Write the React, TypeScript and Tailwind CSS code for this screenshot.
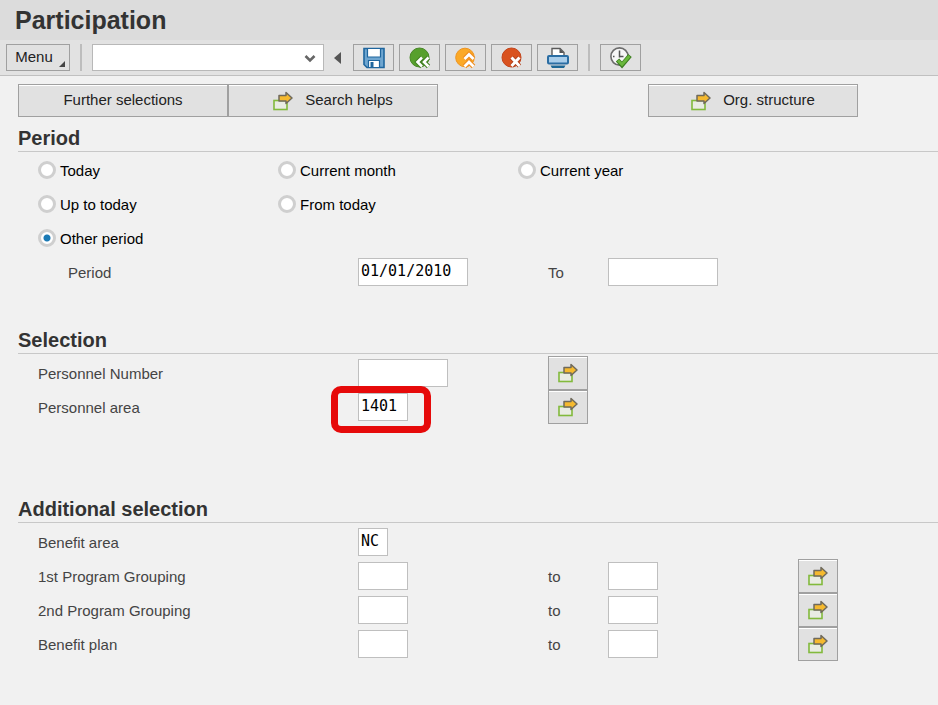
import type { ReactNode } from "react";

const periodOptions = [
  ["Today", "Current month", "Current year"],
  ["Up to today", "From today"],
  ["Other period"],
];

const groupings = ["1st Program Grouping", "2nd Program Grouping", "Benefit plan"];

function ArrowIcon() {
  return (
    <svg width="20" height="20" viewBox="0 0 20 20" fill="none" aria-hidden="true" className="shrink-0">
      <rect x="1" y="9.5" width="13" height="9" fill="#e9ece3" stroke="#82ba3c" strokeWidth="1.6" />
      <path
        d="M6 4.5h7V1.5l6 5.5-6 5.5V10H6z"
        fill="#f5b92e"
        stroke="#6f6a5c"
        strokeWidth="1.5"
        strokeLinejoin="round"
      />
    </svg>
  );
}

function SaveIcon() {
  return (
    <svg width="22" height="22" viewBox="0 0 22 22" aria-hidden="true">
      <path d="M1 1.5h20v19H4l-3-3z" fill="#6fa6d0" stroke="#1f669e" strokeWidth="1.6" />
      <path d="M4.5 1.5h13v8.5h-13z" fill="#fff" stroke="#1f669e" strokeWidth="1.2" />
      <path d="M5.5 13.5h11v7h-11z" fill="#fff" stroke="#1f669e" strokeWidth="1.2" />
      <path d="M7.5 15h3v5h-3z" fill="#1f669e" />
    </svg>
  );
}

function BackIcon() {
  return (
    <svg width="22" height="22" viewBox="0 0 22 22" fill="none" aria-hidden="true">
      <circle cx="10.5" cy="10.5" r="9.5" fill="#57a02c" stroke="#478725" />
      <path d="M13 10.5l-4.5 4.5 4.5 4.5M19.5 10.5l-4.5 4.5 4.5 4.5" stroke="#418021" strokeWidth="4.6" />
      <path d="M13 10.5l-4.5 4.5 4.5 4.5M19.5 10.5l-4.5 4.5 4.5 4.5" stroke="#fff" strokeWidth="2.6" />
    </svg>
  );
}

function ExitIcon() {
  return (
    <svg width="22" height="22" viewBox="0 0 22 22" fill="none" aria-hidden="true">
      <circle cx="10" cy="10.5" r="9.3" fill="#fba927" stroke="#ee9420" />
      <path d="M9.5 12l4.5-4.5 4.5 4.5M9.5 19.5l4.5-4.5 4.5 4.5" stroke="#f08c1c" strokeWidth="5" />
      <path d="M9.5 12l4.5-4.5 4.5 4.5M9.5 19.5l4.5-4.5 4.5 4.5" stroke="#fff" strokeWidth="2.8" />
    </svg>
  );
}

function CancelIcon() {
  return (
    <svg width="22" height="22" viewBox="0 0 22 22" fill="none" aria-hidden="true">
      <circle cx="10.5" cy="10.5" r="9.5" fill="#d9521f" stroke="#c3441b" />
      <path d="M10.5 10.5l8 8.5M18.5 10.5l-8 8.5" stroke="#a93c1a" strokeWidth="4.6" />
      <path d="M10.5 10.5l8 8.5M18.5 10.5l-8 8.5" stroke="#fff" strokeWidth="3" />
    </svg>
  );
}

function PrintIcon() {
  return (
    <svg width="22" height="22" viewBox="0 0 22 22" aria-hidden="true">
      <path d="M5 8V1.5h8l4 4V8" fill="#fff" stroke="#5a5a5a" strokeWidth="1.4" />
      <path d="M12.5 1.5v4.5H17z" fill="#555" />
      <rect x="1" y="9" width="20" height="7.5" rx="1" fill="#a9cdea" stroke="#2a6da3" strokeWidth="2" />
      <path d="M3.5 18.5h15l-1.5 2.5H5z" fill="#1c6796" />
    </svg>
  );
}

function ExecuteIcon() {
  return (
    <svg width="22" height="22" viewBox="0 0 22 22" fill="none" aria-hidden="true">
      <circle cx="9.5" cy="9.5" r="8.6" fill="#f7f7f7" stroke="#6c6c6c" strokeWidth="1.6" />
      <path d="M9.5 3.5v7M9.5 9.5h4M3 9.5h1.5M9.5 15v1.5" stroke="#555" strokeWidth="1.5" />
      <path d="M7.5 13l4.5 5 8-9.5" stroke="#3d7d22" strokeWidth="4.6" />
      <path d="M8 13.5l4 4 7.5-8.5" stroke="#6ab83c" strokeWidth="2.8" />
    </svg>
  );
}

function ToolButton({ label, children }: { label: string; children: ReactNode }) {
  return (
    <button
      type="button"
      aria-label={label}
      className="flex h-[27px] w-[41px] items-center justify-center border border-[#a0a0a0] bg-[#e1e1e1]"
    >
      {children}
    </button>
  );
}

function TextButton({ children }: { children: ReactNode }) {
  return (
    <button
      type="button"
      className="flex h-[33px] w-[210px] items-center justify-center gap-3 border border-[#a0a0a0] bg-[#e1e1e1] text-[#222] shadow-[inset_0_1px_0_#fff]"
    >
      {children}
    </button>
  );
}

function MultipleButton({ label }: { label: string }) {
  return (
    <button
      type="button"
      aria-label={`Multiple selection for ${label}`}
      className="flex h-[34px] w-10 items-center justify-center border border-[#a0a0a0] bg-[#e1e1e1] shadow-[inset_0_1px_0_#fff]"
    >
      <ArrowIcon />
    </button>
  );
}

function Field({ id, value = "", className }: { id: string; value?: string; className: string }) {
  return (
    <input
      id={id}
      type="text"
      defaultValue={value}
      className={`block h-7 border border-[#bfbfbf] bg-white px-0.5 pb-0.5 font-['DejaVu_Sans_Mono',monospace] text-black outline-none ${className}`}
    />
  );
}

function Section({ title, className, children }: { title: string; className: string; children: ReactNode }) {
  return (
    <section className="ml-[18px]">
      <h2 className="border-b border-[#c8c8c8] text-xl leading-[26px] font-bold text-[#333]">{title}</h2>
      <div className={`pl-5 ${className}`}>{children}</div>
    </section>
  );
}

export default function App() {
  return (
    <div className="min-h-screen bg-[#f1f1f1] font-['Liberation_Sans',Arial,sans-serif] text-[15px] text-[#444]">
      <header>
        <h1 className="h-10 bg-[#dcdcdc] pl-[15px] text-[25px] leading-10 font-bold text-[#333]">Participation</h1>
        <div className="flex h-9 items-center border-b border-[#c0c0c0] bg-[#e2e2e2] pl-1.5">
          <button
            type="button"
            className="relative h-[27px] w-16 border border-[#a0a0a0] bg-[#e1e1e1] pr-2 text-[#222]"
          >
            Menu
            <svg width="6" height="6" viewBox="0 0 6 6" aria-hidden="true" className="absolute right-1 bottom-[3px]">
              <path d="M6 0v6H0z" fill="#444" />
            </svg>
          </button>
          <div className="ml-2.5 h-[27px] w-0.5 bg-[#bdbdbd]" />
          <div className="relative ml-2.5">
            <select
              aria-label="Command"
              className="block h-[27px] w-[232px] appearance-none border border-[#b8b8b8] bg-white pl-1 outline-none"
            >
              <option value=""></option>
            </select>
            <svg
              width="12"
              height="8"
              viewBox="0 0 12 8"
              fill="none"
              aria-hidden="true"
              className="pointer-events-none absolute top-[11px] right-2"
            >
              <path d="M1.5 1l4.5 4.5L10.5 1" stroke="#666" strokeWidth="2.6" />
            </svg>
          </div>
          <button type="button" aria-label="Hide command field" className="ml-2.5">
            <svg width="7" height="12" viewBox="0 0 7 12" aria-hidden="true">
              <path d="M7 0v12L0 6z" fill="#555" />
            </svg>
          </button>
          <div className="ml-3 flex gap-[5px]">
            <ToolButton label="Save"><SaveIcon /></ToolButton>
            <ToolButton label="Back"><BackIcon /></ToolButton>
            <ToolButton label="Exit"><ExitIcon /></ToolButton>
            <ToolButton label="Cancel"><CancelIcon /></ToolButton>
            <ToolButton label="Print"><PrintIcon /></ToolButton>
          </div>
          <div className="mx-2.5 h-[27px] w-0.5 bg-[#bdbdbd]" />
          <ToolButton label="Execute"><ExecuteIcon /></ToolButton>
        </div>
      </header>

      <main>
        <div className="flex pt-2 pb-2 pl-[18px]">
          <TextButton>Further selections</TextButton>
          <TextButton><ArrowIcon />Search helps</TextButton>
          <div className="w-[210px]" />
          <TextButton><ArrowIcon />Org. structure</TextButton>
        </div>

        <Section title="Period" className="pt-px pb-[38px]">
          {periodOptions.map((row) => (
            <div key={row[0]} className="flex h-[34px] items-center">
              {row.map((option) => (
                <label key={option} className="flex w-60 items-center gap-1 text-black">
                  <input
                    type="radio"
                    name="period"
                    defaultChecked={option === "Other period"}
                    className="size-[18px] appearance-none rounded-full border-[3px] border-[#cfcfcf] bg-white bg-origin-border checked:bg-[radial-gradient(circle,#1b7ab5_3px,#fff_4px)]"
                  />
                  <span className="pt-0.5">{option}</span>
                </label>
              ))}
            </div>
          ))}
          <div className="flex h-[34px] items-center">
            <label htmlFor="period-from" className="w-80 pt-0.5 pl-[30px]">Period</label>
            <div className="w-[190px]">
              <Field id="period-from" value="01/01/2010" className="w-[110px]" />
            </div>
            <label htmlFor="period-to" className="w-[60px] pt-0.5">To</label>
            <Field id="period-to" className="w-[110px]" />
          </div>
        </Section>

        <Section title="Selection" className="pt-0.5 pb-[72px]">
          <div className="flex h-[34px] items-center">
            <label htmlFor="personnel-number" className="w-80 pt-0.5">Personnel Number</label>
            <div className="w-[190px]">
              <Field id="personnel-number" className="w-[90px]" />
            </div>
            <MultipleButton label="Personnel Number" />
          </div>
          <div className="flex h-[34px] items-center">
            <label htmlFor="personnel-area" className="w-80 pt-0.5">Personnel area</label>
            <div className="relative w-[190px]">
              <Field id="personnel-area" value="1401" className="w-[50px]" />
              <div className="pointer-events-none absolute -top-[7px] -left-[27px] h-[47px] w-[100px] rounded-[10px] border-[7px] border-[#e60a0a]" />
            </div>
            <MultipleButton label="Personnel area" />
          </div>
        </Section>

        <Section title="Additional selection" className="pt-0.5">
          <div className="flex h-[34px] items-center">
            <label htmlFor="benefit-area" className="w-80 pt-0.5">Benefit area</label>
            <Field id="benefit-area" value="NC" className="w-[30px]" />
          </div>
          {groupings.map((name) => (
            <div key={name} className="flex h-[34px] items-center">
              <label htmlFor={name} className="w-80 pt-0.5">{name}</label>
              <div className="w-[190px]">
                <Field id={name} className="w-[50px]" />
              </div>
              <label htmlFor={`${name} to`} className="w-[60px] pt-0.5">to</label>
              <div className="w-[190px]">
                <Field id={`${name} to`} className="w-[50px]" />
              </div>
              <MultipleButton label={name} />
            </div>
          ))}
        </Section>
      </main>
    </div>
  );
}
